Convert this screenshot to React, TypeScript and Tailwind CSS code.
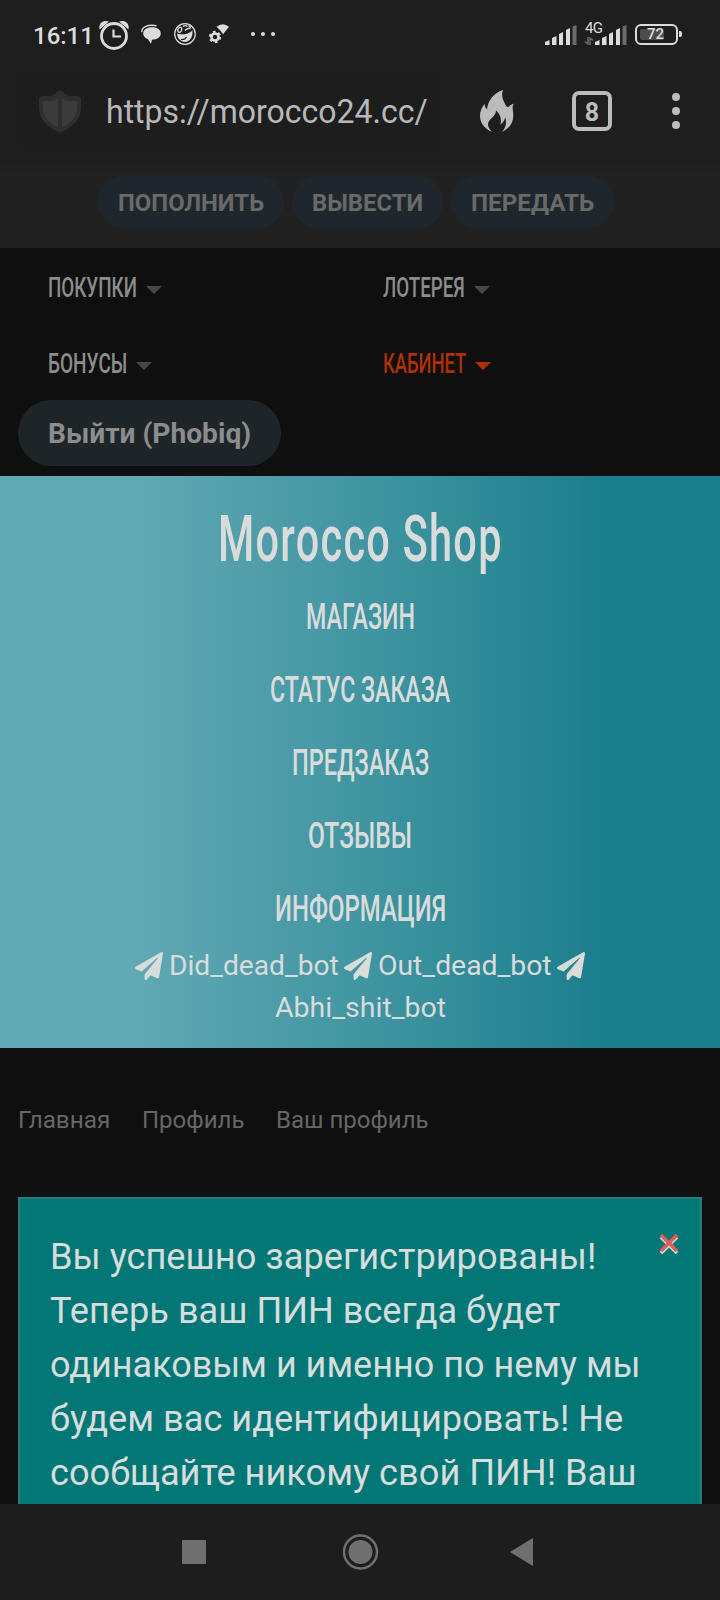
import { useLayoutEffect, useRef, useState } from 'react';
import type { ReactNode } from 'react';
import { FaPaperPlane } from 'react-icons/fa';
import clsx from 'clsx';

interface FitTextProps {
  width: number;
  className?: string;
  children: ReactNode;
}

// Squeezes a line of text horizontally to the given width
const FitText = ({ width, className, children }: FitTextProps) => {
  const ref = useRef<HTMLSpanElement>(null);
  const [scale, setScale] = useState(1);

  useLayoutEffect(() => {
    if (ref.current) setScale(width / ref.current.offsetWidth);
  }, [width]);

  return (
    <span className={clsx('flex whitespace-nowrap', className)} style={{ width }}>
      <span ref={ref} className="block shrink-0 origin-left" style={{ transform: `scaleX(${scale})` }}>
        {children}
      </span>
    </span>
  );
};

const SignalBars = () => (
  <svg width="32" height="20" viewBox="0 0 32 20" fill="#dcdcdc">
    <path d="M0 20v-3l4.500-2v5zM7 20v-7l4.500-2v9zM14 20V9l4-2v13zM21 20V5l4-2v17z" />
    <path d="M27.500 20V1.500l4-1.500v20z" fill="#6b6b6b" />
  </svg>
);

const StatusBar = () => (
  <div className="flex h-[68px] items-center pl-[33px] pr-[38px] text-[#dcdcdc]">
    <FitText width={61} className="mt-[4px] text-[24px] font-medium leading-[30px]">
      16:11
    </FitText>
    <svg className="ml-[5px] mt-[1px]" width="30" height="30" viewBox="0 0 30 30" fill="none" stroke="#dcdcdc">
      <circle cx="15" cy="16" r="12.500" strokeWidth="2.800" />
      <path d="M14.500 9.500v7h7.500" strokeWidth="2.200" />
      <path d="M.6 9.500C-1 3 4.500-.6 10 1.600zM29.400 9.500C31 3 25.500-.6 20 1.600z" fill="#dcdcdc" stroke="none" />
    </svg>
    <svg className="ml-[12px]" width="20" height="20" viewBox="0 0 20 20" fill="#dcdcdc">
      <path d="M11 3.200c5.300 0 8.800 2.600 8.800 6.300 0 3.800-3.500 6.100-8.800 6.200l-1 4-3-4.500C3.800 14 2.200 12 2.200 9.500c0-4 3.500-6.300 8.800-6.300z" />
      <path d="M.9 8.200C.3 3.500 6 .2 15.500 1.700" fill="none" stroke="#dcdcdc" strokeWidth="1.400" />
    </svg>
    <svg className="ml-[13px]" width="22" height="22" viewBox="0 0 22 22" fill="none" stroke="#dcdcdc">
      <circle cx="11" cy="11" r="10.300" strokeWidth="1.200" />
      <path d="M3 10.500c5 1.800 11 .8 15.500-3C19 14 16 18.700 11 19c-4.800.2-7.500-3.500-8-8.500z" fill="#dcdcdc" stroke="none" />
      <path d="M7 16.500q4 .5 5.500-2.500M5 17l3.500 2.500" stroke="#1f1f1f" strokeWidth="1.100" />
      <ellipse cx="5.800" cy="6.800" rx="1.800" ry="2.600" transform="rotate(25 5.800 6.800)" strokeWidth="1.300" />
      <path d="M9 3.300q2.500-1.500 4.500.2M11 7.500q2.500-3 5.500-2M14.500 2.500l2.500 1.700" strokeWidth="1.400" />
    </svg>
    <svg className="ml-[12px]" width="22" height="20" viewBox="0 0 22 20" fill="#dcdcdc">
      <path d="M8.500 2.700q6.500-5 12.500 0l-6 7.500-2.500-3.500z" />
      <circle cx="7" cy="13" r="3.500" fill="none" stroke="#dcdcdc" strokeWidth="2.600" />
      <circle cx="7" cy="13" r="5.200" fill="none" stroke="#dcdcdc" strokeWidth="2" strokeDasharray="2.700 2.745" />
    </svg>
    <div className="ml-[21px] flex gap-[6px]">
      <span className="size-1 rounded-full bg-[#dcdcdc]" />
      <span className="size-1 rounded-full bg-[#dcdcdc]" />
      <span className="size-1 rounded-full bg-[#dcdcdc]" />
    </div>
    <div className="ml-auto mt-[2px] flex items-end">
      <SignalBars />
      <div className="relative ml-[18px] h-5">
        <span className="absolute -left-[10px] -top-[5px] text-[15px] leading-[16px] tracking-[-0.8px]">4G</span>
        <svg className="absolute -left-[11px] top-[12px]" width="10" height="8" viewBox="0 0 10 8" stroke="#6b6b6b" strokeWidth="1.500" fill="none">
          <path d="M4 0v7L.8 4.500M6 8V1l3.200 2.500" />
        </svg>
        <SignalBars />
      </div>
    </div>
    <div className="ml-[8px] flex items-center">
      <div className="flex h-[21px] w-[43px] rounded-[6px] border-[2.5px] border-[#dcdcdc] p-[3px]">
        <div className="relative h-[11px] w-[24px] rounded-[2px] bg-[#4c4c4c]">
          <span className="absolute left-[7px] -top-[1px] text-[15px] font-medium leading-[13px]">72</span>
        </div>
      </div>
      <span className="ml-[1px] h-[6px] w-[3px] rounded-r-[2px] bg-[#dcdcdc]" />
    </div>
  </div>
);

const AddressBar = () => (
  <div className="flex h-[91px] items-start pl-[16px]">
    <div className="mt-[2px] flex h-[81px] w-[424px] items-center rounded-[14px] bg-[#1d1d1d] pl-[22px]">
      <svg width="44" height="44" viewBox="0 0 44 44">
        <path
          d="M22 1.500c3 0 4.500 4.500 9 5.500h8c2.500 0 4 1.500 4 4v8c0 11-8 19.500-21 24.500C9 38.500 1 30 1 19v-8c0-2.500 1.500-4 4-4h8c4.500-1 6-5.500 9-5.500z"
          fill="#2f2f2f"
        />
        <path d="M20 9.500c-3 1.700-5 2.500-8 2.500H5v7c0 8 5.500 15.500 15 19.500zM24 9.500c3 1.700 5 2.500 8 2.500h7v7c0 8-5.500 15.500-15 19.500z" fill="#3b3b3b" />
      </svg>
      <FitText width={322} className="ml-[24px] mt-[3px] text-[33px] leading-[40px] text-[#b8b8b8]">
        https://morocco24.cc/
      </FitText>
    </div>
    <svg className="ml-[40px] mt-[22px]" width="34" height="42" viewBox="0 0 34 42" fill="#bcbcbc">
      <path d="M23 0c-2.500 7 1 12 3.500 16.500C28.500 18 29 15.500 33.700 13.500 31.500 18 33.500 20 33.300 26c-.3 7.500-4 12.500-11.300 16 4.500-5 4.500-9.500 3.300-15-.8 3.500-2.300 6-5 7.500 1.800-6-.5-10.500-4.300-14C16 27 8 28.500 8 34.500c0 3 2 5 4 7.500C4 38.500 0 32.500 0 26c0-5 1.500-8 4.500-12 .5 2.500 1 4 2.500 5.500C8 10 14 3 23 0z" />
    </svg>
    <div className="ml-[58px] mt-[23px] flex size-[40px] items-center justify-center rounded-[7px] border-4 border-[#bcbcbc] pt-[2px] text-[25px] font-bold leading-none text-[#bcbcbc]">
      8
    </div>
    <div className="ml-[60px] mt-[25px] flex flex-col gap-[6px]">
      <span className="size-2 rounded-full bg-[#bcbcbc]" />
      <span className="size-2 rounded-full bg-[#bcbcbc]" />
      <span className="size-2 rounded-full bg-[#bcbcbc]" />
    </div>
  </div>
);

const ACTIONS = [
  { label: 'ПОПОЛНИТЬ', width: 146 },
  { label: 'ВЫВЕСТИ', width: 111 },
  { label: 'ПЕРЕДАТЬ', width: 123 },
];

const MENU = [
  { label: 'ПОКУПКИ', width: 89 },
  { label: 'ЛОТЕРЕЯ', width: 82 },
  { label: 'БОНУСЫ', width: 79 },
  { label: 'КАБИНЕТ', width: 83, active: true },
];

const SHOP_LINKS = [
  { label: 'МАГАЗИН', width: 109 },
  { label: 'СТАТУС ЗАКАЗА', width: 180 },
  { label: 'ПРЕДЗАКАЗ', width: 137 },
  { label: 'ОТЗЫВЫ', width: 104 },
  { label: 'ИНФОРМАЦИЯ', width: 171 },
];

const CRUMBS = [
  { label: 'Главная', width: 92 },
  { label: 'Профиль', width: 102 },
  { label: 'Ваш профиль', width: 153 },
];

const NOTICE = [
  { line: 'Вы успешно зарегистрированы!', width: 546 },
  { line: 'Теперь ваш ПИН всегда будет', width: 510 },
  { line: 'одинаковым и именно по нему мы', width: 591 },
  { line: 'будем вас идентифицировать! Не', width: 573 },
  { line: 'сообщайте никому свой ПИН! Ваш', width: 587 },
];

const MainMenu = () => (
  <nav className="grid h-[152px] grid-cols-[335px_1fr] grid-rows-[76px_76px] pl-[48px]">
    {MENU.map(({ label, width, active }) => (
      <a key={label} className={clsx('flex items-center', active ? 'text-[#b03003]' : 'text-[#8c8c8c]')}>
        <FitText width={width} className="mt-[3px] text-[27px] font-medium leading-[40px]">
          {label}
        </FitText>
        <svg className={clsx('ml-[9px] mt-[8px]', !active && 'text-[#474747]')} width="16" height="8" viewBox="0 0 16 8">
          <path d="M0 0h16L8 8z" fill="currentColor" />
        </svg>
      </a>
    ))}
  </nav>
);

const Shop = () => (
  <section className="flex h-[572px] flex-col items-center bg-linear-to-r from-[#61a9b5] from-18% via-[#3a929e] via-56% to-[#1a7e8c] to-84% text-[#dadcdc]">
    <FitText width={285} className="mt-[24px] text-[65px] font-medium leading-[78px] tracking-[2px]">
      Morocco Shop
    </FitText>
    <div className="mt-[2px] flex flex-col items-center">
      {SHOP_LINKS.map(({ label, width }) => (
        <FitText key={label} width={width} className="h-[73px] items-center text-[36px] font-medium leading-[50px]">
          {label}
        </FitText>
      ))}
    </div>
    <div className="flex flex-col items-center text-[28px] leading-[42px]">
      <div className="flex items-center">
        <FaPaperPlane className="size-[28px]" />
        <FitText width={170} className="ml-[6px]">Did_dead_bot</FitText>
        <FaPaperPlane className="ml-[5px] size-[28px]" />
        <FitText width={174} className="ml-[6px]">Out_dead_bot</FitText>
        <FaPaperPlane className="ml-[5px] size-[28px]" />
      </div>
      <FitText width={171}>Abhi_shit_bot</FitText>
    </div>
  </section>
);

const Notice = () => (
  <section className="mx-[18px] flex h-[307px] justify-between border-2 border-b-0 border-[#20807f] bg-[#037676] pl-[30px] pr-[21px]">
    <div className="mt-[31px] text-[36px] leading-[54px] text-[#d7dddc]">
      {NOTICE.map(({ line, width }) => (
        <FitText key={line} width={width}>
          {line}
        </FitText>
      ))}
    </div>
    <svg className="-ml-5 mt-[34px]" width="20" height="22" viewBox="0 0 20 22" fill="none" strokeWidth="3.600">
      <path d="M2 4l16 16M18 4L2 20" stroke="#dadcdc" />
      <path d="M2 2l16 16M18 2L2 18" stroke="#d95f57" />
    </svg>
  </section>
);

const NavigationBar = () => (
  <footer className="grid h-24 grid-cols-[182px_161px_168px_1fr] items-center bg-[#1d1d1d] text-[#6f6f6f]">
    <span />
    <span className="size-6 rounded-[1px] bg-[#6f6f6f]" />
    <svg width="36" height="36" viewBox="0 0 36 36">
      <circle cx="17.500" cy="18" r="16.500" fill="none" stroke="currentColor" strokeWidth="2.500" />
      <circle cx="17.500" cy="18" r="12" fill="currentColor" />
    </svg>
    <svg className="-ml-[1px]" width="24" height="28" viewBox="0 0 24 28">
      <path d="M0 14L22 .5q1-.3 1 .8v25.400q0 1.100-1 .8z" fill="currentColor" />
    </svg>
  </footer>
);

export default function App() {
  return (
    <div className="flex h-[1600px] w-[720px] flex-col overflow-hidden bg-[#0f0f0f] font-['Roboto',sans-serif]">
      <header className="bg-[#1e1e1e]">
        <StatusBar />
        <AddressBar />
      </header>
      <div className="flex h-[89px] justify-center gap-2 bg-[linear-gradient(#1d1d1d,#212121_14px)] pr-[8px] pt-[17px]">
        {ACTIONS.map(({ label, width }) => (
          <button key={label} className="h-[52px] rounded-full bg-[#20272c] px-5 pt-[2px] text-[24px] font-bold text-[#696969]">
            <FitText width={width}>{label}</FitText>
          </button>
        ))}
      </div>
      <MainMenu />
      <button className="ml-[18px] flex h-[66px] w-[263px] items-center justify-center rounded-full bg-[#1e2528] pt-[2px] text-[28px] font-bold text-[#8c8c8c]">
        <FitText width={203}>Выйти (Phobiq)</FitText>
      </button>
      <div className="mt-[10px]">
        <Shop />
      </div>
      <div className="flex h-[149px] gap-[32px] pl-[18px] pt-[54px] text-[24px] leading-[36px] text-[#666]">
        {CRUMBS.map(({ label, width }) => (
          <FitText key={label} width={width}>
            {label}
          </FitText>
        ))}
      </div>
      <Notice />
      <NavigationBar />
    </div>
  );
}
